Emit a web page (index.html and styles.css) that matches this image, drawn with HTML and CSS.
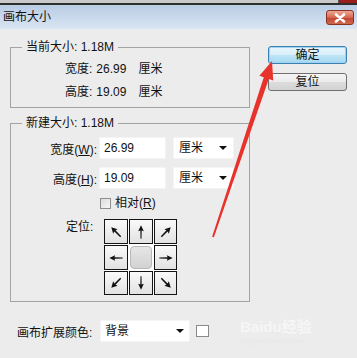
FILE: index.html
```html
<!DOCTYPE html>
<html lang="zh">
<head>
<meta charset="utf-8">
<link rel="stylesheet" href="styles.css">
</head>
<body>
<div class="topstrip"><span class="redtab"></span></div>
<div class="titlebar">
  <span class="title">画布大小</span>
  <span class="close"><svg width="14" height="10" viewBox="0 0 14 10"><path d="M3 1.5 L11 8.5 M11 1.5 L3 8.5" stroke="#fff" stroke-width="2.6" stroke-linecap="round"/></svg></span>
</div>
<div class="main">
  <div class="left">
    <fieldset class="grp g1">
      <legend>当前大小: 1.18M</legend>
      <div class="row"><span>宽度:</span><span class="val">26.99</span><span class="un">厘米</span></div>
      <div class="row"><span>高度:</span><span class="val">19.09</span><span class="un">厘米</span></div>
    </fieldset>
    <fieldset class="grp g2">
      <legend>新建大小: 1.18M</legend>
      <div class="frow">
        <span class="flabel">宽度(<u>W</u>):</span>
        <span class="input">26.99</span>
        <span class="select unit">厘米<i class="caret"></i></span>
      </div>
      <div class="frow second">
        <span class="flabel">高度(<u>H</u>):</span>
        <span class="input">19.09</span>
        <span class="select unit">厘米<i class="caret"></i></span>
      </div>
      <div class="rel"><span class="cb"></span>相对(<u>R</u>)</div>
      <div class="anchor">
        <span class="alabel">定位:</span>
        <div class="grid">
          <span class="cell"><svg viewBox="0 0 24 24"><g transform="rotate(-45 12 12)"><path d="M12 4 L8.2 11 L11 10.2 L11.2 20 L12.8 20 L13 10.2 L15.8 11 Z" fill="#111"/></g></svg></span>
          <span class="cell"><svg viewBox="0 0 24 24"><path d="M12 4 L8.6 11 L11.2 10.2 L11.4 20 L12.6 20 L12.8 10.2 L15.4 11 Z" fill="#111"/></svg></span>
          <span class="cell"><svg viewBox="0 0 24 24"><g transform="rotate(45 12 12)"><path d="M12 4 L8.2 11 L11 10.2 L11.2 20 L12.8 20 L13 10.2 L15.8 11 Z" fill="#111"/></g></svg></span>
          <span class="cell"><svg viewBox="0 0 24 24"><g transform="rotate(-90 12 12)"><path d="M12 4 L8.6 11 L11.2 10.2 L11.4 20 L12.6 20 L12.8 10.2 L15.4 11 Z" fill="#111"/></g></svg></span>
          <span class="cell center"><span class="knob"></span></span>
          <span class="cell"><svg viewBox="0 0 24 24"><g transform="rotate(90 12 12)"><path d="M12 4 L8.6 11 L11.2 10.2 L11.4 20 L12.6 20 L12.8 10.2 L15.4 11 Z" fill="#111"/></g></svg></span>
          <span class="cell"><svg viewBox="0 0 24 24"><g transform="rotate(-135 12 12)"><path d="M12 4 L8.2 11 L11 10.2 L11.2 20 L12.8 20 L13 10.2 L15.8 11 Z" fill="#111"/></g></svg></span>
          <span class="cell"><svg viewBox="0 0 24 24"><g transform="rotate(180 12 12)"><path d="M12 4 L8.6 11 L11.2 10.2 L11.4 20 L12.6 20 L12.8 10.2 L15.4 11 Z" fill="#111"/></g></svg></span>
          <span class="cell"><svg viewBox="0 0 24 24"><g transform="rotate(135 12 12)"><path d="M12 4 L8.2 11 L11 10.2 L11.2 20 L12.8 20 L13 10.2 L15.8 11 Z" fill="#111"/></g></svg></span>
        </div>
      </div>
    </fieldset>
  </div>
  <div class="buttons">
    <span class="btn ok">确定</span>
    <span class="btn">复位</span>
  </div>
</div>
<div class="bottom">
  <span class="blabel">画布扩展颜色:</span>
  <span class="select bg">背景<i class="caret"></i></span>
  <span class="swatch"></span>
</div>
<div class="watermark"><span class="wm-big">Bai<b>du</b>经验</span><span class="wm-small">jingyan.baidu.com</span></div>
<svg class="pointer" width="357" height="358" viewBox="0 0 357 358">
  <polygon points="272,61 273.2,80.5 268.8,79 213.9,237.3 212.1,236.7 263.8,77.3 259.4,75.8" fill="#e8322c"/>
</svg>
</body>
</html>
```

FILE: styles.css
```css
html, body {
  margin: 0;
  padding: 0;
}
body {
  width: 357px;
  height: 358px;
  overflow: hidden;
  background: #ececec;
  font-family: "Liberation Sans", "Noto Sans CJK SC", sans-serif;
  font-size: 12px;
  color: #111;
  position: relative;
}
.topstrip {
  height: 5px;
  background: linear-gradient(#cacaca 0, #cacaca 3px, #2e2e2e 3px, #2e2e2e 5px);
  display: flex;
  justify-content: flex-end;
}
.redtab {
  width: 18px;
  height: 3px;
  background: #9a1c1c;
  border-left: 1px solid #555;
}
.titlebar {
  height: 24px;
  background: linear-gradient(#b9cce4, #d9e5f2);
  display: flex;
  align-items: center;
  justify-content: space-between;
  padding-left: 3px;
}
.title {
  font-size: 12px;
  line-height: 16px;
  color: #111;
}
.close {
  width: 26px;
  height: 13px;
  margin-right: 3px;
  margin-top: 1px;
  border: 1px solid #8a3324;
  border-radius: 3px;
  background: linear-gradient(#eea995, #d6664f 50%, #c2432e 51%, #cf6a4f);
  display: flex;
  align-items: center;
  justify-content: center;
}
.main {
  display: flex;
  padding-top: 11px;
}
.left {
  margin-left: 10px;
  width: 240px;
}
.grp {
  margin: 0;
  border: 1px solid #a3a3a3;
  padding: 0 0 3px 11px;
  min-width: 0;
}
.grp legend {
  padding: 0 4px;
  line-height: 15px;
  height: 15px;
}
.row {
  margin-left: 43px;
  line-height: 23px;
  height: 23px;
  display: flex;
}
.row .val {
  margin-left: 4px;
}
.row .un {
  margin-left: 12px;
}
.g1 {
  padding-top: 3px;
}
.g2 {
  margin-top: 8px;
  padding-bottom: 6px;
}
.frow {
  display: flex;
  align-items: center;
  height: 22px;
  margin-top: 6px;
}
.frow.second {
  margin-top: 8px;
}
.flabel {
  width: 75px;
  text-align: right;
}
.input {
  margin-left: 2px;
  width: 67px;
  height: 22px;
  box-sizing: border-box;
  background: #fff;
  border: 1px solid #f4f4f4;
  padding-left: 4px;
  line-height: 20px;
}
.select {
  position: relative;
  box-sizing: border-box;
  height: 22px;
  background: #fff;
  border: 1px solid #f4f4f4;
  padding-left: 5px;
  line-height: 20px;
  display: flex;
  align-items: center;
}
.unit {
  margin-left: 7px;
  width: 61px;
}
.caret {
  width: 0;
  height: 0;
  border-left: 4px solid transparent;
  border-right: 4px solid transparent;
  border-top: 4px solid #111;
  margin-left: auto;
  margin-right: 6px;
}
.rel {
  display: flex;
  align-items: center;
  height: 13px;
  line-height: 13px;
  margin-top: 8px;
  margin-left: 78px;
}
.cb {
  width: 9px;
  height: 9px;
  border: 1px solid #8f8f8f;
  background: linear-gradient(135deg, #dcdcdc, #f7f7f7);
  margin-right: 4px;
}
.anchor {
  display: flex;
  align-items: flex-start;
  margin-top: 9px;
}
.alabel {
  margin-left: 44px;
  width: 38px;
  line-height: 16px;
}
.grid {
  display: grid;
  grid-template-columns: 24px 24px 23px;
  grid-template-rows: 25px 25px 24px;
  gap: 1px;
  background: #fff;
  padding: 0;
}
.cell {
  box-sizing: border-box;
  border: 1.5px solid #151515;
  background: linear-gradient(#fafafa, #e2e2e2);
  display: flex;
  align-items: center;
  justify-content: center;
}
.cell svg {
  width: 20px;
  height: 20px;
}
.cell.center {
  border: none;
  background: #fff;
  padding: 1px;
}
.knob {
  width: 100%;
  height: 100%;
  box-sizing: border-box;
  border: 1px solid #b8b8b8;
  border-radius: 4px;
  background: linear-gradient(#e6e6e6, #d2d2d2);
}
.buttons {
  margin-left: 18px;
  margin-top: 6px;
  display: flex;
  flex-direction: column;
  gap: 9px;
}
.btn {
  width: 79px;
  height: 18px;
  box-sizing: border-box;
  border: 1px solid #707070;
  border-radius: 3px;
  background: linear-gradient(#f4f4f4, #ebebeb 50%, #dcdcdc 51%, #d2d2d2);
  text-align: center;
  line-height: 16px;
  font-size: 12px;
}
.btn.ok {
  border-color: #3c7fb1;
  background: linear-gradient(#e8f5fc, #d9eff9 50%, #bde4f5 51%, #a7d9f3);
  box-shadow: inset 0 0 0 1px #9fd3f2;
}
.bottom {
  display: flex;
  align-items: center;
  margin-top: 18px;
  height: 22px;
}
.blabel {
  margin-left: 17px;
  width: 83px;
}
.bg {
  width: 90px;
  padding-left: 4px;
}
.bg .caret {
  margin-right: 5px;
}
.swatch {
  margin-left: 6px;
  width: 13px;
  height: 12px;
  box-sizing: border-box;
  border: 1px solid #8a8a8a;
  background: #fff;
}
.watermark {
  position: absolute;
  left: 240px;
  top: 318px;
  display: flex;
  flex-direction: column;
  color: #f6f6f6;
  pointer-events: none;
}
.wm-big {
  font-size: 15px;
  line-height: 18px;
  font-weight: bold;
}
.wm-big b {
  font-weight: bold;
}
.wm-small {
  font-size: 8px;
  line-height: 10px;
  color: #e8e8e8;
}
.pointer {
  position: absolute;
  left: 0;
  top: 0;
  pointer-events: none;
}
```
